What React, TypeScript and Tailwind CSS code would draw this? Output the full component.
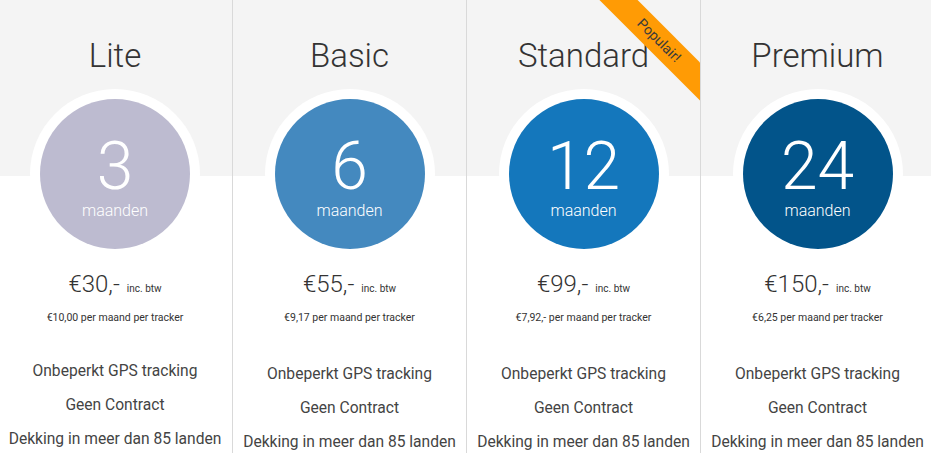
import React from 'react';

interface Plan {
  name: string;
  months: number;
  price: string;
  perMonth: string;
  color: string;
  popular?: boolean;
}

const plans: Plan[] = [
  { name: 'Lite', months: 3, price: '€30,-', perMonth: '€10,00 per maand per tracker', color: 'bg-[#bdbbd0]' },
  { name: 'Basic', months: 6, price: '€55,-', perMonth: '€9,17 per maand per tracker', color: 'bg-[#4489bf]' },
  { name: 'Standard', months: 12, price: '€99,-', perMonth: '€7,92,- per maand per tracker', color: 'bg-[#1477bc]', popular: true },
  { name: 'Premium', months: 24, price: '€150,-', perMonth: '€6,25 per maand per tracker', color: 'bg-[#02548a]' },
];

const features = ['Onbeperkt GPS tracking', 'Geen Contract', 'Dekking in meer dan 85 landen'];

const PlanColumn: React.FC<{ plan: Plan; index: number }> = ({ plan, index }) => {
  return (
    <div
      className={`relative flex flex-col items-center overflow-hidden bg-[linear-gradient(#f4f4f4_0_176px,#ffffff_176px)] ${
        index > 0 ? 'border-l border-[#d9d9d9]' : ''
      }`}
    >
      {plan.popular && (
        <div className="absolute top-[27px] right-[-44px] flex h-[27px] w-[170px] rotate-45 items-center justify-center bg-[#ff9b05] text-[14px] text-[#3a3a3a]">
          Populair!
        </div>
      )}
      <h2 className="pt-[39px] text-[33px] font-light leading-none text-[#333]">{plan.name}</h2>
      <div className="mt-[17px] rounded-full bg-white p-[10px]">
        <div className={`flex h-[150px] w-[150px] flex-col items-center rounded-full pt-[35px] text-white ${plan.color}`}>
          <span className="text-[66px] font-light leading-none">{plan.months}</span>
          <span className="mt-[3px] text-[16px] font-light leading-none">maanden</span>
        </div>
      </div>
      <div className="mt-[13px] flex items-baseline text-[#333]">
        <span className="text-[24px] font-light leading-none">{plan.price}</span>
        <span className="ml-[7px] text-[10px] leading-none">inc. btw</span>
      </div>
      <p className="mt-[17px] text-[10.5px] leading-none text-[#333]">{plan.perMonth}</p>
      <ul className={`${index === 0 ? 'mt-[30px]' : 'mt-[33px]'} flex flex-col items-center text-[15.6px] leading-[34px] text-[#444]`}>
        {features.map((f) => (
          <li key={f} className="whitespace-nowrap">
            {f}
          </li>
        ))}
      </ul>
    </div>
  );
};

export default function App() {
  return (
    <div className="h-[453px] w-[931px] overflow-hidden bg-white font-['Roboto',sans-serif]">
      <div className="ml-[-2px] grid h-full w-[936px] grid-cols-4">
        {plans.map((p, i) => (
          <PlanColumn key={p.name} plan={p} index={i} />
        ))}
      </div>
    </div>
  );
}
